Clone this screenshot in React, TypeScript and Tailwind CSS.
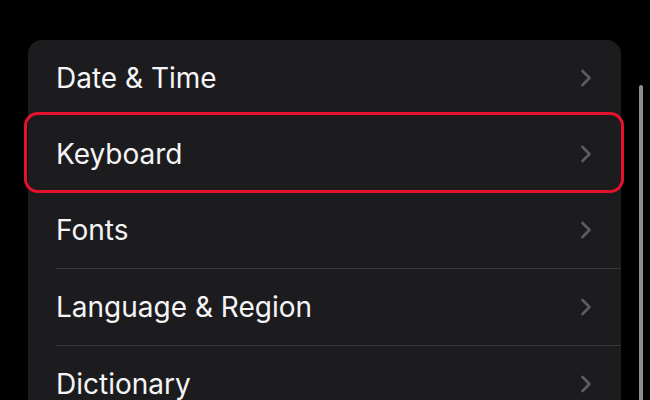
const rows = ["Date & Time", "Keyboard", "Fonts", "Language & Region", "Dictionary"];

const Chevron = () => (
  <svg width="12" height="20" viewBox="0 0 12 20" fill="none" className="shrink-0">
    <polyline points="2.5,3 9.5,10 2.5,17" stroke="#5c5c61" strokeWidth="2.6" strokeLinecap="round" strokeLinejoin="round" />
  </svg>
);

export default function App() {
  return (
    <div className="w-[650px] h-[400px] bg-black overflow-hidden flex font-['Inter',sans-serif]">
      <div className="w-[593px] ml-[28px] mt-[40px] shrink-0">
        <div className="bg-[#1c1c1e] rounded-t-[14px]">
          {rows.map((label, i) => (
            <div key={label} className="relative">
              {i > 2 && <div className="ml-[28px] h-px bg-[#38383a]" />}
              <div className="h-[76px] flex items-center pl-[28px] pr-[29px]">
                <span className="flex-1 text-[28px] text-[#f5f5f7]">{label}</span>
                <Chevron />
              </div>
              {label === "Keyboard" && (
                <div className="absolute -left-[4px] -right-[3px] -top-[4px] -bottom-[1px] border-[3px] border-[#e5122d] rounded-[14px]" />
              )}
            </div>
          ))}
        </div>
      </div>
      <div className="ml-[18px] mt-[85px] w-[4px] h-[330px] rounded-full bg-[#8c8c8e] shrink-0" />
    </div>
  );
}
